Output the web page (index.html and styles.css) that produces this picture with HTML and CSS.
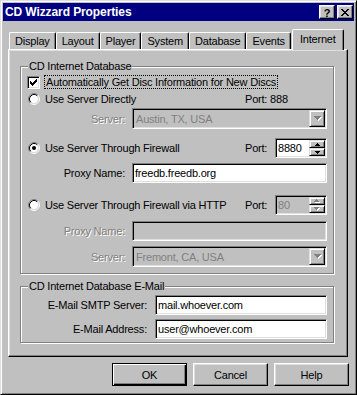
FILE: index.html
```html
<!DOCTYPE html>
<html>
<head>
<meta charset="utf-8">
<link rel="stylesheet" href="styles.css">
</head>
<body>
<div class="window">
  <div class="titlebar">
    <span class="title">CD Wizzard Properties</span>
    <div class="tb-btns">
      <div class="tb-btn help">?</div>
      <div class="tb-btn">
        <svg width="8" height="7" viewBox="0 0 8 7" shape-rendering="crispEdges"><path fill="#000" d="M0 0h2v1H0z M6 0h2v1H6z M1 1h2v1H1z M5 1h2v1H5z M2 2h4v1H2z M3 3h2v1H3z M2 4h4v1H2z M1 5h2v1H1z M5 5h2v1H5z M0 6h2v1H0z M6 6h2v1H6z"/></svg>
      </div>
    </div>
  </div>

  <div class="tabs">
    <div class="tab">Display</div>
    <div class="tab">Layout</div>
    <div class="tab">Player</div>
    <div class="tab">System</div>
    <div class="tab">Database</div>
    <div class="tab">Events</div>
    <div class="tab active">Internet</div>
  </div>

  <div class="panel">
    <div class="group g1">
      <div class="group-title">CD Internet Database</div>

      <div class="row r1">
        <div class="chk">
          <svg width="11" height="11" viewBox="0 0 11 11" shape-rendering="crispEdges"><path fill="#000" d="M2 4h1v3H2z M3 5h1v3H3z M4 6h1v3H4z M5 5h1v3H5z M6 4h1v3H6z M7 3h1v3H7z M8 2h1v3H8z"/></svg>
        </div>
        <span class="focus">Automatically Get Disc Information for New Discs</span>
      </div>

      <div class="row opt r2">
        <svg class="radio" width="12" height="12" viewBox="0 0 12 12"><circle cx="6" cy="6" r="4.2" fill="#fff"/><path d="M2.11 9.89A5.5 5.5 0 0 1 9.89 2.11" stroke="#808080" fill="none"/><path d="M9.89 2.11A5.5 5.5 0 0 1 2.11 9.89" stroke="#fff" fill="none"/><path d="M2.82 9.18A4.5 4.5 0 0 1 9.18 2.82" stroke="#000" fill="none"/><path d="M9.18 2.82A4.5 4.5 0 0 1 2.82 9.18" stroke="#dfdfdf" fill="none"/></svg>
        <span class="opt-label">Use Server Directly</span>
        <span class="port">Port: 888</span>
      </div>

      <div class="row r3">
        <span class="lbl disabled">Server:</span>
        <div class="combo">
          <span class="combo-text">Austin, TX, USA</span>
          <div class="drop">
            <svg width="8" height="5" viewBox="0 0 8 5" shape-rendering="crispEdges"><path fill="#fff" d="M1 1h7v1H1z M2 2h5v1H2z M3 3h3v1H3z M4 4h1v1H4z"/><path fill="#808080" d="M0 0h7v1H0z M1 1h5v1H1z M2 2h3v1H2z M3 3h1v1H3z"/></svg>
          </div>
        </div>
      </div>

      <div class="row opt r4">
        <svg class="radio" width="12" height="12" viewBox="0 0 12 12"><circle cx="6" cy="6" r="4.2" fill="#fff"/><path d="M2.11 9.89A5.5 5.5 0 0 1 9.89 2.11" stroke="#808080" fill="none"/><path d="M9.89 2.11A5.5 5.5 0 0 1 2.11 9.89" stroke="#fff" fill="none"/><path d="M2.82 9.18A4.5 4.5 0 0 1 9.18 2.82" stroke="#000" fill="none"/><path d="M9.18 2.82A4.5 4.5 0 0 1 2.82 9.18" stroke="#dfdfdf" fill="none"/><circle cx="6" cy="6" r="2" fill="#000"/></svg>
        <span class="opt-label">Use Server Through Firewall</span>
        <div class="port">
          <span class="port-lbl">Port:</span>
          <div class="spin">
            <span class="spin-val">8880</span>
            <div class="spin-btns">
              <div class="sbtn"><svg width="5" height="3" viewBox="0 0 5 3" shape-rendering="crispEdges"><path fill="#000" d="M2 0h1v1H2z M1 1h3v1H1z M0 2h5v1H0z"/></svg></div>
              <div class="sbtn"><svg width="5" height="3" viewBox="0 0 5 3" shape-rendering="crispEdges"><path fill="#000" d="M0 0h5v1H0z M1 1h3v1H1z M2 2h1v1H2z"/></svg></div>
            </div>
          </div>
        </div>
      </div>

      <div class="row r5">
        <span class="lbl">Proxy Name:</span>
        <div class="input">freedb.freedb.org</div>
      </div>

      <div class="row opt r6">
        <svg class="radio" width="12" height="12" viewBox="0 0 12 12"><circle cx="6" cy="6" r="4.2" fill="#fff"/><path d="M2.11 9.89A5.5 5.5 0 0 1 9.89 2.11" stroke="#808080" fill="none"/><path d="M9.89 2.11A5.5 5.5 0 0 1 2.11 9.89" stroke="#fff" fill="none"/><path d="M2.82 9.18A4.5 4.5 0 0 1 9.18 2.82" stroke="#000" fill="none"/><path d="M9.18 2.82A4.5 4.5 0 0 1 2.82 9.18" stroke="#dfdfdf" fill="none"/></svg>
        <span class="opt-label">Use Server Through Firewall via HTTP</span>
        <div class="port">
          <span class="port-lbl">Port:</span>
          <div class="spin off">
            <span class="spin-val">80</span>
            <div class="spin-btns">
              <div class="sbtn"><svg width="6" height="4" viewBox="0 0 6 4" shape-rendering="crispEdges"><path fill="#fff" d="M3 1h1v1H3z M2 2h3v1H2z M1 3h5v1H1z"/><path fill="#808080" d="M2 0h1v1H2z M1 1h3v1H1z M0 2h5v1H0z"/></svg></div>
              <div class="sbtn"><svg width="6" height="4" viewBox="0 0 6 4" shape-rendering="crispEdges"><path fill="#fff" d="M1 1h5v1H1z M2 2h3v1H2z M3 3h1v1H3z"/><path fill="#808080" d="M0 0h5v1H0z M1 1h3v1H1z M2 2h1v1H2z"/></svg></div>
            </div>
          </div>
        </div>
      </div>

      <div class="row r7">
        <span class="lbl disabled">Proxy Name:</span>
        <div class="input off"></div>
      </div>

      <div class="row r8">
        <span class="lbl disabled">Server:</span>
        <div class="combo">
          <span class="combo-text">Fremont, CA, USA</span>
          <div class="drop">
            <svg width="8" height="5" viewBox="0 0 8 5" shape-rendering="crispEdges"><path fill="#fff" d="M1 1h7v1H1z M2 2h5v1H2z M3 3h3v1H3z M4 4h1v1H4z"/><path fill="#808080" d="M0 0h7v1H0z M1 1h5v1H1z M2 2h3v1H2z M3 3h1v1H3z"/></svg>
          </div>
        </div>
      </div>
    </div>

    <div class="group g2">
      <div class="group-title">CD Internet Database E-Mail</div>
      <div class="row m1">
        <span class="lbl wide">E-Mail SMTP Server:</span>
        <div class="input mail">mail.whoever.com</div>
      </div>
      <div class="row m2">
        <span class="lbl wide">E-Mail Address:</span>
        <div class="input mail">user@whoever.com</div>
      </div>
    </div>
  </div>

  <div class="buttons">
    <div class="btn default">OK</div>
    <div class="btn">Cancel</div>
    <div class="btn">Help</div>
  </div>
</div>
</body>
</html>
```

FILE: styles.css
```css
* { box-sizing: border-box; }

body {
  margin: 0;
  background: #c0c0c0;
  font-family: "Liberation Sans", Arial, sans-serif;
  font-size: 11px;
  letter-spacing: -0.2px;
  color: #000;
}

.window {
  width: 357px;
  height: 395px;
  border: 1px solid;
  border-color: #dfdfdf #000 #000 #dfdfdf;
  box-shadow: inset 1px 1px #fff, inset -1px -1px #808080;
  padding: 2px;
  display: flex;
  flex-direction: column;
  background: #c0c0c0;
}

/* title bar */
.titlebar {
  height: 18px;
  background: #000080;
  color: #fff;
  display: flex;
  align-items: center;
  justify-content: space-between;
  padding: 0 1px 0 2px;
}
.title {
  font-weight: bold;
  font-size: 12px;
  letter-spacing: -0.1px;
}
.tb-btns { display: flex; gap: 2px; }
.tb-btn {
  width: 16px;
  height: 14px;
  background: #c0c0c0;
  border: 1px solid;
  border-color: #fff #000 #000 #fff;
  box-shadow: inset -1px -1px #808080, inset 1px 1px #dfdfdf;
  color: #000;
  display: flex;
  align-items: center;
  justify-content: center;
  font-weight: bold;
  font-size: 11px;
  letter-spacing: 0;
}
.tb-btn.help { padding-top: 1px; }

/* tabs */
.tabs {
  display: flex;
  align-items: flex-end;
  height: 20px;
  margin-top: 8px;
  padding-left: 6px;
}
.tab {
  height: 17px;
  padding: 0 5px 1px;
  border: 1px solid;
  border-bottom: none;
  border-color: #fff #000 transparent #fff;
  border-radius: 2px 2px 0 0;
  box-shadow: inset -1px 0 #808080;
  display: flex;
  align-items: center;
  white-space: nowrap;
}
.tab.active {
  height: 21px;
  margin-bottom: -1px;
  margin-left: 1px;
  padding: 0 7px 2px;
  position: relative;
  z-index: 1;
  background: #c0c0c0;
}

/* panel */
.panel {
  margin-left: 5px;
  width: 340px;
  height: 308px;
  border: 1px solid;
  border-color: #fff #000 #000 #fff;
  box-shadow: inset -1px -1px #808080, inset 1px 1px #dfdfdf;
  padding: 16px 13px 0 11px;
  display: flex;
  flex-direction: column;
}

.group {
  border: 1px solid #808080;
  box-shadow: inset 1px 1px #fff, 1px 1px #fff;
  display: flex;
  flex-direction: column;
}
.g1 { padding-bottom: 6px; }
.g2 { margin-top: 12px; padding-bottom: 3px; }

.group-title {
  align-self: flex-start;
  margin: -7px 0 0 7px;
  padding: 0 1px;
  background: #c0c0c0;
  line-height: 13px;
  white-space: nowrap;
}

.row { display: flex; align-items: center; }
.r1 { height: 14px; margin-top: 2px; padding-left: 6px; }
.r2 { height: 14px; margin-top: 3px; }
.r3 { height: 21px; margin-top: 2px; }
.r4 { height: 20px; margin-top: 9px; }
.r5 { height: 20px; margin-top: 5px; }
.r6 { height: 20px; margin-top: 12px; }
.r7 { height: 20px; margin-top: 6px; }
.r8 { height: 21px; margin-top: 5px; }
.m1 { height: 20px; margin-top: 2px; }
.m2 { height: 20px; margin-top: 4px; }

.chk {
  width: 13px;
  height: 13px;
  flex: none;
  background: #fff;
  border: 1px solid;
  border-color: #808080 #fff #fff #808080;
  box-shadow: inset 1px 1px #000, inset -1px -1px #dfdfdf;
}
.chk svg { display: block; }

.focus {
  margin-left: 4px;
  border: 1px dotted #000;
  padding: 0 1px;
  line-height: 12px;
  white-space: nowrap;
}

.opt { padding-left: 7px; }
.radio { flex: none; display: block; }
.opt-label { margin-left: 5px; flex: 1; white-space: nowrap; }

.port {
  width: 82px;
  margin-right: 6px;
  display: flex;
  align-items: center;
  white-space: nowrap;
}
.port-lbl { width: 30px; }

.lbl {
  width: 104px;
  text-align: right;
  white-space: nowrap;
  flex: none;
}
.lbl.wide { width: 126px; }
.disabled { color: #808080; text-shadow: 1px 1px 0 #fff; }

.input {
  width: 195px;
  height: 20px;
  margin-left: 7px;
  background: #fff;
  border: 1px solid;
  border-color: #808080 #fff #fff #808080;
  box-shadow: inset 1px 1px #000, inset -1px -1px #dfdfdf;
  padding: 0 2px;
  display: flex;
  align-items: center;
  white-space: nowrap;
}
.input.off { background: #c0c0c0; }
.input.mail { width: 172px; margin-left: 8px; }

.combo {
  width: 195px;
  height: 21px;
  margin-left: 7px;
  background: #c0c0c0;
  border: 1px solid;
  border-color: #808080 #fff #fff #808080;
  box-shadow: inset 1px 1px #000, inset -1px -1px #dfdfdf;
  padding: 1px;
  display: flex;
  align-items: center;
}
.combo-text {
  flex: 1;
  padding-left: 2px;
  color: #808080;
  white-space: nowrap;
}
.drop {
  width: 16px;
  height: 17px;
  background: #c0c0c0;
  border: 1px solid;
  border-color: #dfdfdf #000 #000 #dfdfdf;
  box-shadow: inset 1px 1px #fff, inset -1px -1px #808080;
  display: flex;
  align-items: center;
  justify-content: center;
}
.drop svg { display: block; margin-left: 1px; }

.spin {
  width: 52px;
  height: 20px;
  background: #fff;
  border: 1px solid;
  border-color: #808080 #fff #fff #808080;
  box-shadow: inset 1px 1px #000, inset -1px -1px #dfdfdf;
  padding: 1px;
  display: flex;
  align-items: center;
}
.spin.off { background: #c0c0c0; color: #808080; }
.spin-val { flex: 1; padding-left: 1px; }
.spin-btns {
  width: 16px;
  height: 16px;
  display: flex;
  flex-direction: column;
}
.sbtn {
  height: 8px;
  background: #c0c0c0;
  border: 1px solid;
  border-color: #dfdfdf #000 #000 #dfdfdf;
  box-shadow: inset 1px 1px #fff, inset -1px -1px #808080;
  display: flex;
  align-items: center;
  justify-content: center;
}
.sbtn svg { display: block; }

/* dialog buttons */
.buttons {
  display: flex;
  justify-content: flex-end;
  gap: 6px;
  margin-top: 6px;
  padding-right: 5px;
}
.btn {
  width: 75px;
  height: 23px;
  border: 1px solid;
  border-color: #fff #000 #000 #fff;
  box-shadow: inset -1px -1px #808080, inset 1px 1px #dfdfdf;
  display: flex;
  align-items: center;
  justify-content: center;
}
.btn.default {
  border-color: #000;
  box-shadow: inset 1px 1px #fff, inset -1px -1px #000, inset -2px -2px #808080;
}
```
